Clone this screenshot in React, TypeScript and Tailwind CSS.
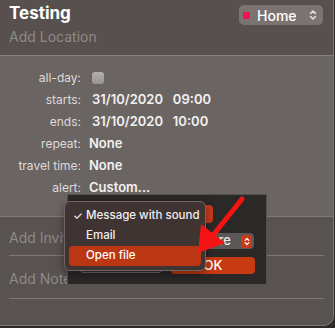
const rows = [
  { label: "all-day:", value: null },
  { label: "starts:", value: "31/10/2020\u00a0\u00a0\u00a009:00" },
  { label: "ends:", value: "31/10/2020\u00a0\u00a0\u00a010:00" },
  { label: "repeat:", value: "None" },
  { label: "travel time:", value: "None" },
  { label: "alert:", value: "Custom..." },
];

function Stepper({ className }: { className: string }) {
  return (
    <svg viewBox="0 0 8 12" className={className} fill="none" stroke="currentColor" strokeWidth="1.6" strokeLinecap="round" strokeLinejoin="round">
      <path d="M1.5 4.5 4 2l2.5 2.5M1.5 7.5 4 10l2.5-2.5" />
    </svg>
  );
}

export default function App() {
  return (
    <div className="w-[335px] h-[328px] bg-[#2e2a29] font-['Inter','Liberation_Sans',sans-serif]">
      <div className="relative w-[334px] h-[326px] flex flex-col overflow-hidden rounded-br-[10px] border-r border-b border-[#7d7776] bg-[#585251]">
        {/* header */}
        <div className="h-[56px] shrink-0 flex justify-between border-b border-[#85807f] bg-[#57504e] pl-[9px] pr-[10px]">
          <div className="flex flex-col">
            <span className="mt-[2px] text-[17px] font-bold leading-[22px] text-white">Testing</span>
            <span className="mt-[3px] text-[14px] leading-[20px] text-[#8f8988]">Add Location</span>
          </div>
          <div className="mt-[5px] flex h-[20px] w-[84px] items-center rounded-[5px] bg-[#7a7372] pl-[4px] pr-[6px]">
            <span className="h-[7px] w-[7px] rounded-[1px] bg-[#f2124d]" />
            <span className="ml-[7px] text-[14px] font-medium text-white">Home</span>
            <Stepper className="ml-auto h-[12px] w-[8px] text-[#e6e2e1]" />
          </div>
        </div>

        {/* details */}
        <div className="h-[161px] shrink-0 flex flex-col border-b border-[#807a79] bg-[#6a6463] pt-[11px]">
          {rows.map((r) => (
            <div key={r.label} className="flex h-[22px] items-center">
              <span className="w-[82px] pr-[1px] text-right text-[12px] text-[#dedad9]">{r.label}</span>
              {r.value === null ? (
                <span className="ml-[10px] h-[12px] w-[12px] rounded-[3px] bg-gradient-to-b from-[#b3aeae] to-[#9a9494]" />
              ) : (
                <span className={`${r.value.startsWith("3") ? "ml-[10px]" : "ml-[7px]"} text-[13px] font-semibold text-[#f3f1f0]`}>{r.value}</span>
              )}
            </div>
          ))}
        </div>

        {/* bottom rows */}
        <div className="mx-[9px] flex flex-col">
          <div className="flex h-[39px] items-center border-b border-[#7c7675] pt-[2px] text-[14px] text-[#8f8988]">Add Invitees</div>
          <div className="flex h-[43px] items-center border-b border-[#7c7675] pt-[2px] text-[14px] text-[#8f8988]">Add Notes</div>
        </div>

        {/* alert editor panel */}
        <div className="absolute left-[67px] top-[194px] h-[91px] w-[200px] border border-[#57524f] bg-[#2b2828]">
          <div className="absolute left-[126px] top-[10px] h-[18px] w-[19px] rounded-[4px] bg-[#c9391a]" />
          <div className="absolute left-[82px] top-[38px] flex h-[16px] w-[104px] items-center rounded-[4px] bg-[#5c5857] pr-[2px]">
            <span className="ml-auto mr-[10px] text-[13px] font-medium text-[#e9e6e5]">before</span>
            <span className="flex h-[13px] w-[11px] items-center justify-center rounded-[3px] bg-[#c9391a]">
              <Stepper className="h-[9px] w-[6px] text-white" />
            </span>
          </div>
          <div className="absolute left-[12px] top-[60px] h-[18px] w-[82px] rounded-[3px] border border-[#6e6968] bg-[#3a3636]" />
          <div className="absolute left-[103px] top-[62px] flex h-[17px] w-[84px] items-center justify-center rounded-[4px] bg-[#c73a12] text-[13px] font-medium text-white">
            OK
          </div>
        </div>

        {/* menu */}
        <div className="absolute left-[64px] top-[201px] flex h-[70px] w-[142px] flex-col rounded-[6px] border border-[#6f6564] bg-[#3f3432] px-[4px] pt-[4px] shadow-[0_4px_10px_rgba(0,0,0,0.4)]">
          <div className="flex h-[20px] items-center whitespace-nowrap text-[11.5px] font-medium text-[#f1eeed]">
            <span className="w-[17px] pl-[4px] text-[11px]">✓</span>
            <span>Message with sound</span>
          </div>
          <div className="flex h-[20px] items-center pl-[17px] text-[11.5px] font-medium text-[#f1eeed]">Email</div>
          <div className="flex h-[20px] items-center rounded-[4px] bg-[#bb3714] pl-[17px] text-[11.5px] font-medium text-white">Open file</div>
        </div>

        {/* red annotation arrow */}
        <svg className="absolute left-0 top-0" width="335" height="328" viewBox="0 0 335 328">
          <line x1="242" y1="199" x2="214" y2="234" stroke="#f41414" strokeWidth="5" strokeLinecap="round" />
          <polygon points="198,253 201,224 225,243" fill="#f41414" />
        </svg>
      </div>
    </div>
  );
}
